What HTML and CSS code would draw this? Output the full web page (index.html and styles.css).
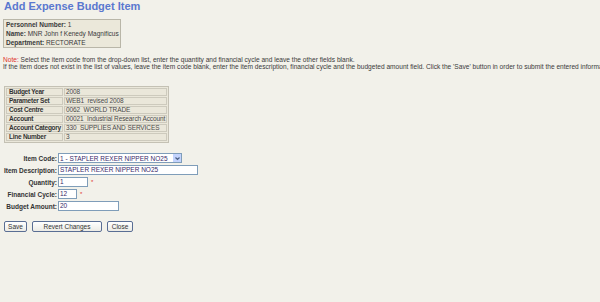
FILE: index.html
```html
<!DOCTYPE html>
<html>
<head>
<meta charset="utf-8">
<link rel="stylesheet" href="styles.css">
</head>
<body>
<div class="page">
  <h1 class="title">Add Expense Budget Item</h1>
  <div class="person">
    <div><b>Personnel Number:</b> 1</div>
    <div><b>Name:</b> MNR John f Kenedy Magnificus</div>
    <div><b>Department:</b> RECTORATE</div>
  </div>
  <div class="note">
    <div><span class="red">Note:</span> Select the item code from the drop-down list, enter the quantity and financial cycle and leave the other fields blank.</div>
    <div>If the item does not exist in the list of values, leave the item code blank, enter the item description, financial cycle and the budgeted amount field. Click the 'Save' button in order to submit the entered information.</div>
  </div>
  <table class="info">
    <tr><th>Budget Year</th><td>2008</td></tr>
    <tr><th>Parameter Set</th><td>WEB1&nbsp; revised 2008</td></tr>
    <tr><th>Cost Centre</th><td>0062&nbsp; WORLD TRADE</td></tr>
    <tr><th>Account</th><td>00021&nbsp; Industrial Research Account</td></tr>
    <tr><th>Account Category</th><td>330&nbsp; SUPPLIES AND SERVICES</td></tr>
    <tr><th>Line Number</th><td>3</td></tr>
  </table>
  <div class="form">
    <label class="lbl">Item Code:</label>
    <div class="field"><div class="select"><span>1 - STAPLER REXER NIPPER NO25</span><span class="arrow"><svg width="7" height="7" viewBox="0 0 7 7"><path d="M1.5 2.5 L3.5 4.5 L5.5 2.5" fill="none" stroke="#4d6185" stroke-width="1.2"/></svg></span></div></div>
    <label class="lbl">Item Description:</label>
    <div class="field"><div class="input w-desc">STAPLER REXER NIPPER NO25</div></div>
    <label class="lbl">Quantity:</label>
    <div class="field"><div class="input w-qty">1</div><span class="req">*</span></div>
    <label class="lbl">Financial Cycle:</label>
    <div class="field"><div class="input w-cyc">12</div><span class="req">*</span></div>
    <label class="lbl">Budget Amount:</label>
    <div class="field"><div class="input w-amt">20</div></div>
  </div>
  <div class="buttons">
    <button class="btn w-save">Save</button>
    <button class="btn w-revert">Revert Changes</button>
    <button class="btn w-close">Close</button>
  </div>
</div>
</body>
</html>
```
FILE: styles.css
```css
html, body {
  margin: 0;
  padding: 0;
  background: #f2f1ea;
  overflow: hidden;
}
.page {
  font-family: "Liberation Sans", Arial, sans-serif;
  font-size: 6.5px;
  color: #3a3a3a;
  padding: 1px 3px 0 3px;
  width: 600px;
  box-sizing: border-box;
}
.title {
  margin: 0;
  font-size: 11px;
  font-weight: bold;
  color: #5a78cf;
  line-height: 11px;
  padding-left: 1px;
}
.person {
  margin-top: 7px;
  display: inline-block;
  width: 118px;
  box-sizing: border-box;
  border: 1px solid #b9b6a8;
  background: #ebe8da;
  padding: 0 1px 0 2px;
  line-height: 9px;
  white-space: nowrap;
}
.note {
  margin-top: 8px;
  white-space: nowrap;
  line-height: 7px;
  font-size: 6.6px;
}
.red { color: #e0302a; }
.info {
  margin-top: 16px;
  margin-left: 1px;
  border-collapse: separate;
  border-spacing: 1px;
  background: #eae7da;
  border: 1px solid #c4c1b4;
  font-size: 6.5px;
  width: 164px;
}
.info th, .info td {
  border: 1px solid #cdcabd;
  padding: 0 1px 0 2px;
  height: 6px;
  line-height: 6px;
  text-align: left;
  white-space: nowrap;
}
.info th { width: 52px; color: #333; letter-spacing: -0.25px; }
.info td { color: #4a4a4a; padding-left: 1px; letter-spacing: -0.1px; }
.form {
  margin-top: 10px;
  display: grid;
  grid-template-columns: 55px auto;
  row-gap: 2px;
  align-items: center;
}
.lbl {
  text-align: right;
  font-weight: bold;
  padding-right: 1px;
  color: #333;
  white-space: nowrap;
}
.field {
  display: flex;
  align-items: center;
}
.select {
  display: flex;
  align-items: center;
  justify-content: space-between;
  width: 124px;
  height: 10px;
  box-sizing: border-box;
  border: 1px solid #7f9db9;
  background: #fff;
  padding-left: 1px;
  color: #3a2a6a;
}
.arrow {
  width: 8px;
  height: 8px;
  background: #c3d3fd;
  display: flex;
  align-items: center;
  justify-content: center;
}
.input {
  height: 10px;
  box-sizing: border-box;
  border: 1px solid #7f9db9;
  background: #fff;
  padding-left: 1px;
  line-height: 8px;
  color: #3a2a6a;
}
.w-desc { width: 140px; }
.w-qty { width: 30px; }
.w-cyc { width: 19px; }
.w-amt { width: 61px; }
.req { color: #e0302a; margin-left: 3px; font-size: 6px; }
.buttons {
  margin-top: 10px;
  margin-left: 1px;
  display: flex;
  gap: 5px;
}
.btn {
  font-family: "Liberation Sans", Arial, sans-serif;
  font-size: 6.5px;
  color: #333;
  height: 11px;
  padding: 0;
  border: 1px solid #5a6e94;
  border-radius: 2px;
  background: linear-gradient(#ffffff, #ecebe5);
}
.w-save { width: 23px; }
.w-revert { width: 70px; }
.w-close { width: 26px; }
```
